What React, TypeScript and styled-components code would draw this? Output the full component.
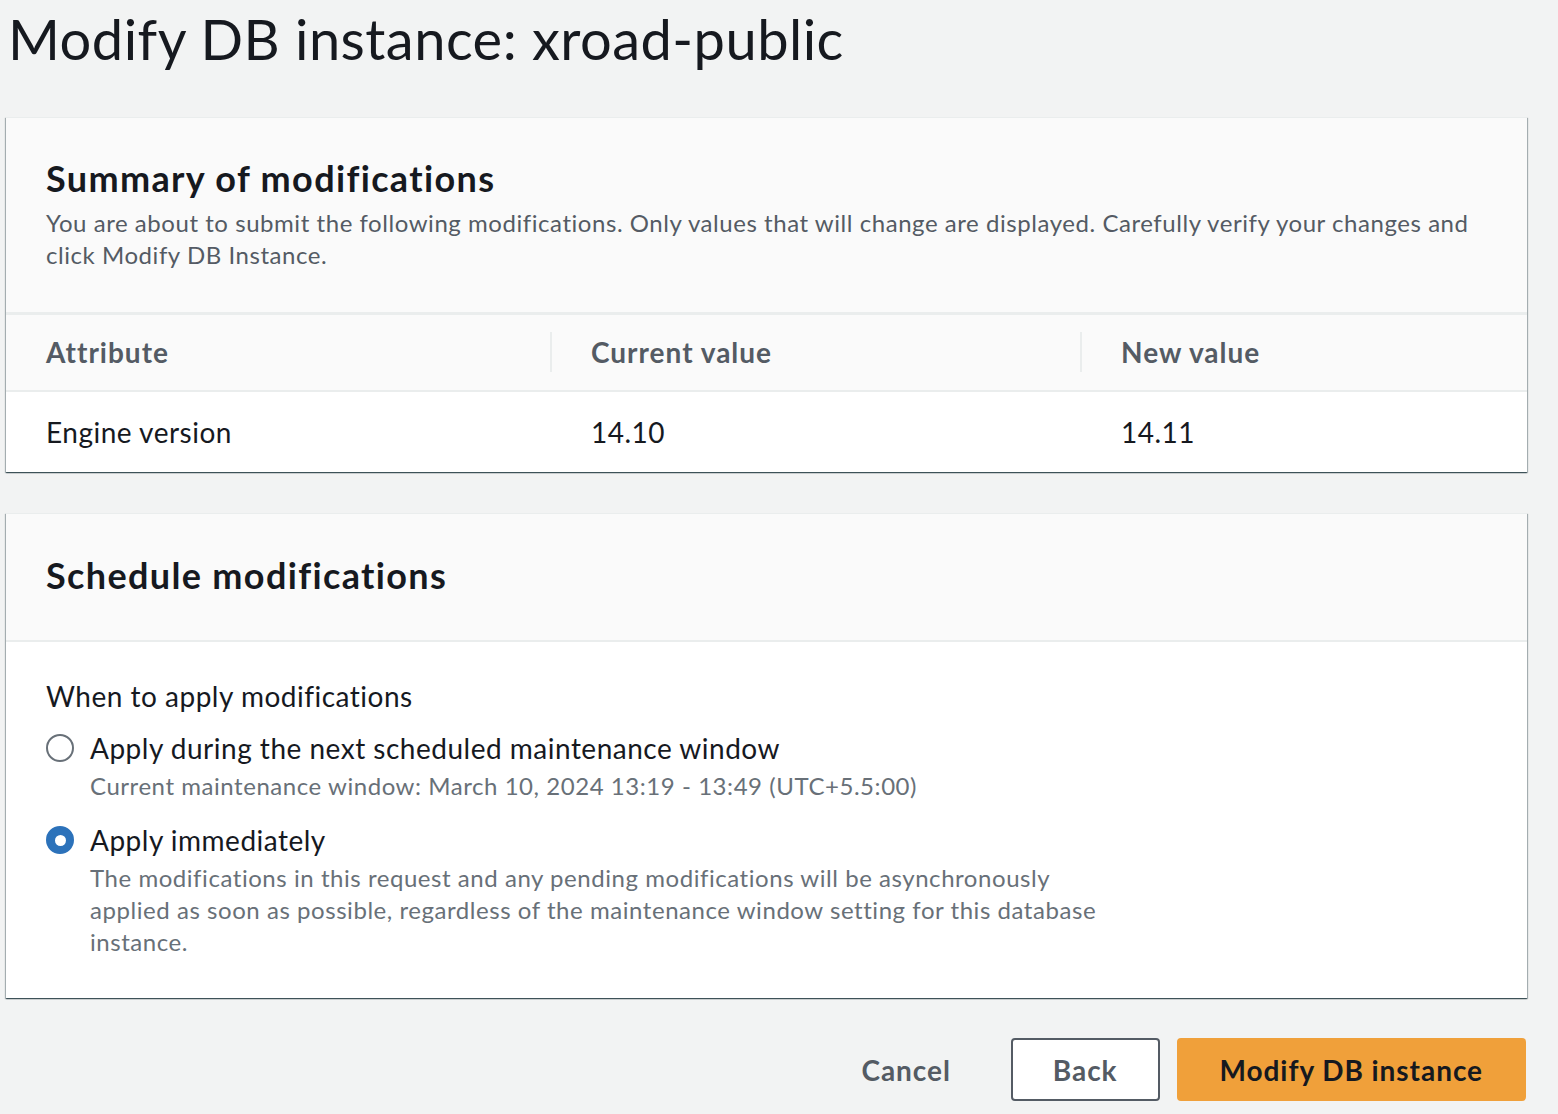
import React from "react";
import styled, { createGlobalStyle } from "styled-components";

const GlobalStyle = createGlobalStyle`
  html, body {
    margin: 0;
    padding: 0;
    background: #f2f3f3;
  }
  body {
    font-family: Lato, "Open Sans", "Liberation Sans", sans-serif;
    color: #16191f;
  }
  * { box-sizing: border-box; }
`;

const Page = styled.div`
  display: flex;
  flex-direction: column;
  padding: 5px 31px 0 6px;
`;

const Title = styled.h1`
  margin: 0 0 45px 2px;
  font-size: 56px;
  line-height: 67px;
  font-weight: 400;
  letter-spacing: 0.47px;
  color: #16191f;
`;

const Card = styled.section<{ $gap?: number }>`
  background: #ffffff;
  border-top: 1px solid #eaeded;
  box-shadow: 0 1px 1px 0 rgba(0, 28, 36, 0.55),
    1px 1px 1px 0 rgba(0, 28, 36, 0.25),
    -1px 1px 1px 0 rgba(0, 28, 36, 0.25);
  margin-bottom: ${(p) => p.$gap ?? 0}px;
`;

const CardHeader = styled.header<{ $pt: number; $pb: number; $border: number }>`
  background: #fafafa;
  padding: ${(p) => p.$pt}px 40px ${(p) => p.$pb}px 40px;
  border-bottom: ${(p) => p.$border}px solid #eaeded;
`;

const CardTitle = styled.h2`
  margin: 0;
  font-size: 36px;
  line-height: 43px;
  font-weight: 700;
  letter-spacing: 1.35px;
  color: #16191f;
`;

const CardDesc = styled.p`
  margin: 7px 0 0 0;
  font-size: 24px;
  line-height: 32px;
  letter-spacing: 0.55px;
  color: #545b64;
`;

const Table = styled.div`
  display: grid;
  grid-template-columns: 544px 530px 1fr;
`;

const HeadCell = styled.div<{ $first?: boolean }>`
  position: relative;
  height: 77px;
  display: flex;
  align-items: center;
  padding-left: ${(p) => (p.$first ? 40 : 41)}px;
  background: #fafafa;
  border-bottom: 2px solid #eaeded;
  font-size: 28px;
  font-weight: 700;
  letter-spacing: 1px;
  color: #545b64;
  padding-bottom: 2px;

  &::before {
    content: "";
    display: ${(p) => (p.$first ? "none" : "block")};
    position: absolute;
    left: 0;
    top: 17px;
    bottom: 18px;
    width: 2px;
    background: #eaeded;
  }
`;

const BodyCell = styled.div<{ $first?: boolean }>`
  height: 80px;
  display: flex;
  align-items: center;
  padding-left: ${(p) => (p.$first ? 40 : 41)}px;
  font-size: 28px;
  letter-spacing: 0.5px;
  color: #16191f;
`;

const CardBody = styled.div`
  padding: 36px 40px 40px 40px;
  display: flex;
  flex-direction: column;
`;

const FieldLabel = styled.div`
  font-size: 28px;
  line-height: 36px;
  letter-spacing: 0.5px;
  color: #16191f;
  margin-bottom: 16px;
`;

const Option = styled.label`
  display: grid;
  grid-template-columns: 28px 1fr;
  column-gap: 16px;
  align-items: start;
  margin-bottom: 20px;
  cursor: pointer;

  &:last-child {
    margin-bottom: 0;
  }
`;

const Radio = styled.span<{ $checked?: boolean }>`
  width: 28px;
  height: 28px;
  margin-top: 4px;
  border-radius: 50%;
  display: flex;
  align-items: center;
  justify-content: center;
  background: ${(p) => (p.$checked ? "#2c72ba" : "#ffffff")};
  border: 2px solid ${(p) => (p.$checked ? "#2c72ba" : "#687078")};

  &::after {
    content: "";
    display: ${(p) => (p.$checked ? "block" : "none")};
    width: 11px;
    height: 11px;
    border-radius: 50%;
    background: #ffffff;
  }
`;

const OptionText = styled.div`
  display: flex;
  flex-direction: column;
`;

const OptionTitle = styled.span`
  font-size: 28px;
  line-height: 36px;
  letter-spacing: 0.5px;
  color: #16191f;
`;

const OptionDesc = styled.span`
  font-size: 24px;
  line-height: 32px;
  letter-spacing: 0.55px;
  color: #687078;
  max-width: 1010px;
  margin-top: 4px;
`;

const Footer = styled.div`
  display: flex;
  justify-content: flex-end;
  align-items: center;
  gap: 17px;
  margin-top: 40px;
  margin-right: 1px;
`;

const Button = styled.button<{ $variant: "link" | "normal" | "primary" }>`
  height: 63px;
  padding: 0 ${(p) => (p.$variant === "normal" ? 40 : 41)}px;
  border-radius: 4px;
  font-family: inherit;
  font-size: 28px;
  font-weight: 700;
  letter-spacing: 0.95px;
  cursor: pointer;
  border: 2px solid
    ${(p) => (p.$variant === "normal" ? "#545b64" : p.$variant === "primary" ? "#f0a03a" : "transparent")};
  background: ${(p) => (p.$variant === "normal" ? "#ffffff" : p.$variant === "primary" ? "#f0a03a" : "transparent")};
  color: ${(p) => (p.$variant === "primary" ? "#16191f" : "#545b64")};
`;

export default function App() {
  return (
    <>
      <GlobalStyle />
      <Page>
        <Title>Modify DB instance: xroad-public</Title>

        <Card $gap={41}>
          <CardHeader $pt={39} $pb={41} $border={3}>
            <CardTitle>Summary of modifications</CardTitle>
            <CardDesc>
              You are about to submit the following modifications. Only values that will change are displayed. Carefully
              verify your changes and click Modify DB Instance.
            </CardDesc>
          </CardHeader>
          <Table>
            <HeadCell $first>Attribute</HeadCell>
            <HeadCell>Current value</HeadCell>
            <HeadCell>New value</HeadCell>
            <BodyCell $first>Engine version</BodyCell>
            <BodyCell>14.10</BodyCell>
            <BodyCell>14.11</BodyCell>
          </Table>
        </Card>

        <Card>
          <CardHeader $pt={40} $pb={43} $border={2}>
            <CardTitle>Schedule modifications</CardTitle>
          </CardHeader>
          <CardBody>
            <FieldLabel>When to apply modifications</FieldLabel>
            <Option>
              <Radio />
              <OptionText>
                <OptionTitle>Apply during the next scheduled maintenance window</OptionTitle>
                <OptionDesc>Current maintenance window: March 10, 2024 13:19 - 13:49 (UTC+5.5:00)</OptionDesc>
              </OptionText>
            </Option>
            <Option>
              <Radio $checked />
              <OptionText>
                <OptionTitle>Apply immediately</OptionTitle>
                <OptionDesc>
                  The modifications in this request and any pending modifications will be asynchronously applied as soon
                  as possible, regardless of the maintenance window setting for this database instance.
                </OptionDesc>
              </OptionText>
            </Option>
          </CardBody>
        </Card>

        <Footer>
          <Button $variant="link">Cancel</Button>
          <Button $variant="normal">Back</Button>
          <Button $variant="primary">Modify DB instance</Button>
        </Footer>
      </Page>
    </>
  );
}
